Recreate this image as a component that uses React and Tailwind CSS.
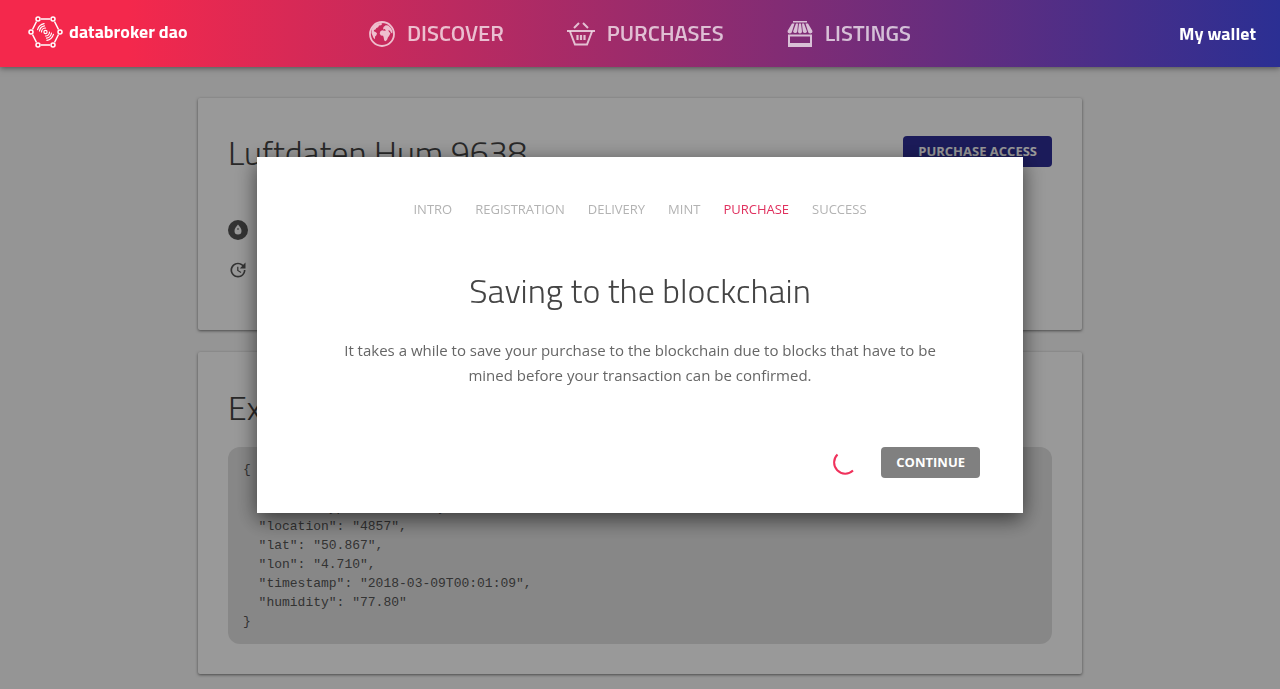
import React from "react";
import { MdUpdate } from "react-icons/md";

const steps = ["Intro", "Registration", "Delivery", "Mint", "Purchase", "Success"];

const example = `{
  "key": "9638",
  "sensor_type": "humidity",
  "location": "4857",
  "lat": "50.867",
  "lon": "4.710",
  "timestamp": "2018-03-09T00:01:09",
  "humidity": "77.80"
}`;

function Logo() {
  const nodes = [[10, 3], [25, 3], [32, 16], [25, 29], [10, 29], [3, 16]];
  return (
    <svg viewBox="0 0 35 32" className="h-8 w-[35px]" fill="none" stroke="currentColor" strokeWidth="1.5">
      <path d="M13 3h9M26.5 5.5l4 8M30.5 18.5l-4 8M22 29h-9M8.5 26.5l-4-8M4.5 13.5l4-8" />
      {nodes.map(([x, y]) => (
        <circle key={`${x}-${y}`} cx={x} cy={y} r="2" />
      ))}
      <circle cx="17.5" cy="16" r="1.6" strokeWidth="1.2" />
      <g strokeWidth="1.2" strokeLinecap="round">
        <path d="M13.5 16a4 4 0 0 1 4-4M11.5 15a6.200 6.200 0 0 1 5-5.200M9.600 13.700a8.400 8.400 0 0 1 6.500-6" />
        <path d="M21.5 16a4 4 0 0 1-4 4M23.5 17a6.200 6.200 0 0 1-5 5.200M25.400 18.300a8.400 8.400 0 0 1-6.500 6" />
      </g>
    </svg>
  );
}

function GlobeIcon() {
  return (
    <svg viewBox="0 0 26 26" className="size-[26px]" fill="currentColor">
      <circle cx="13" cy="13" r="12" fill="none" stroke="currentColor" strokeWidth="1.8" />
      <path d="M3 8C5 4 8.500 2 12 2l1.500.8-1.500 1.500-2 .3-.8 1.700-1.800.7-.9 1.500-1.500.4-.200 1.300 1.700.9 1.500 1.200-.6 2-1.300 1.300-.200 2.700-1.500-1.500-1-2.500L2.500 12z" />
      <path d="M14.5 6l2.200-1.800 2.500.3c2.500 1.800 4 4 4.300 6.500l-.3 1.500-1.400-1-.7-1.800-1.900-.5.9 1.700 1.300 1.300-1.200 2.500-1.300 1.700-.7 2.200-1.500 1.600-1.500-.6-.5-3.200-.6-1.600-2.200-.4-1.200-1.800.7-2.400 1.800-1 2 .6 1.800-.4-1.300-1.300-1.700.3z" />
    </svg>
  );
}

function BasketIcon() {
  return (
    <svg viewBox="0 0 28 24" className="h-6 w-7" fill="none" stroke="currentColor" strokeWidth="2">
      <path d="M0 9h28" />
      <path d="M3 9.5l5 13h12l5-13" />
      <path d="M7 6l5-5M21 6l-5-5" />
      <path d="M10.500 13v5M14 13v5M17.500 13v5" strokeWidth="2.200" />
    </svg>
  );
}

function StoreIcon() {
  return (
    <svg viewBox="0 0 26 26" className="size-[26px]" fill="currentColor">
      <path d="M6 0h14v1.500H6z" />
      <path d="M5 2.500h2.500L5 10.500a2.200 2.200 0 0 1-4.500-.5zM9 2.500h2l-.7 8a2.200 2.200 0 0 1-4.200 0zM12 2.500h2l1 8a2 2 0 0 1-4 0zM15 2.500h2l3 8a2.200 2.200 0 0 1-4.200 0zM18.500 2.500H21l4.500 7.500a2.200 2.200 0 0 1-4.500.5z" />
      <path fillRule="evenodd" d="M1 13.500h24V26H1zM3 15.500V22h20v-6.500z" />
    </svg>
  );
}

function NavItem({ icon, children }) {
  return (
    <a href="#" className="flex items-center gap-3 text-white/70">
      {icon}
      <span>{children}</span>
    </a>
  );
}

function Header() {
  return (
    <header className="relative z-20 grid h-[67px] grid-cols-[1fr_auto_1fr] items-center bg-linear-to-r/srgb from-[#f4284c] from-10% to-[#2b2f93] px-6 font-['Titillium_Web','Roboto',sans-serif] text-white shadow-[0_1px_6px_rgba(0,0,0,0.5)]">
      <a href="#" className="flex items-center gap-[6px] pl-1 pb-1 text-lg font-bold">
        <Logo />
        <span>databroker dao</span>
      </a>
      <nav className="flex gap-[63px] text-[22px] font-semibold">
        <NavItem icon={<GlobeIcon />}>DISCOVER</NavItem>
        <NavItem icon={<BasketIcon />}>PURCHASES</NavItem>
        <NavItem icon={<StoreIcon />}>LISTINGS</NavItem>
      </nav>
      <a href="#" className="justify-self-end text-lg font-bold">My wallet</a>
    </header>
  );
}

function Card({ children, className = "" }) {
  return (
    <section className={`rounded-xs bg-white px-[30px] shadow-[0_1px_3px_rgba(0,0,0,0.5)] ${className}`}>
      {children}
    </section>
  );
}

function Modal() {
  return (
    <div className="fixed inset-0 z-10 flex items-start justify-center bg-black/40 pt-[157px]">
      <div role="dialog" aria-labelledby="dialog-title" className="w-3/5 max-w-[766px] bg-white px-[43px] pt-[42px] pb-[35px] shadow-[0_6px_20px_rgba(0,0,0,0.6)]">
        {/* Steps */}
        <ol className="flex justify-center gap-[23px] text-[13px] leading-5 text-[#b3b3b3] uppercase">
          {steps.map((step) => (
            <li key={step} className={step === "Purchase" ? "text-[#e0305e]" : ""}>
              {step}
            </li>
          ))}
        </ol>

        <h1 id="dialog-title" className="mt-[47px] text-center font-['Titillium_Web','Roboto',sans-serif] text-[34px] leading-[48px] font-light text-[#444]">
          Saving to the blockchain
        </h1>
        <p className="mx-auto mt-6 max-w-[600px] text-center text-[15px] leading-[25px] text-[#666]">
          It takes a while to save your purchase to the blockchain due to blocks that have to be mined before your transaction can be confirmed.
        </p>

        {/* Actions */}
        <div className="mt-[59px] flex items-center justify-end gap-6">
          <svg viewBox="0 0 24 24" className="size-6" fill="none" stroke="#f0325c" strokeWidth="2">
            <path d="M4.500 3.500A10 10 0 0 0 20 19.500" />
          </svg>
          <button type="button" className="h-[31px] rounded bg-[#808080] px-[15px] text-[13px] font-bold text-white">CONTINUE</button>
        </div>
      </div>
    </div>
  );
}

export default function App() {
  return (
    <div className="min-h-screen bg-[#f8f8f8] font-['Open_Sans',sans-serif] text-[#444]">
      <Header />
      <main className="mx-auto mt-[31px] flex max-w-[884px] flex-col gap-[22px] pb-4">
        <Card className="pt-[30px] pb-[50px]">
          <div className="flex items-start justify-between">
            <h2 className="font-['Titillium_Web','Roboto',sans-serif] text-[34px] leading-[48px] font-light">Luftdaten Hum 9638</h2>
            <button type="button" className="mt-2 h-[31px] rounded bg-[#2e2e96] px-[15px] text-[13px] font-bold text-white">PURCHASE ACCESS</button>
          </div>
          <ul className="mt-11 flex flex-col gap-5 text-sm">
            <li className="flex items-center gap-3">
              <svg viewBox="0 0 20 20" className="size-5">
                <circle cx="10" cy="10" r="10" fill="#555" />
                <path d="M10 4.5c2 2.300 3.500 4 3.500 6.500a3.500 3.500 0 0 1-7 0c0-2.500 1.500-4.200 3.500-6.500z" fill="#fff" />
                <path d="M10 8v2" stroke="#555" />
              </svg>
              Humidity
            </li>
            <li className="flex items-center gap-3">
              <MdUpdate className="size-5 text-[#555]" />
              Every 5 minutes
            </li>
          </ul>
        </Card>
        <Card className="pt-[31px] pb-[30px]">
          <h2 className="font-['Titillium_Web','Roboto',sans-serif] text-[34px] leading-[48px] font-light">Example data</h2>
          <pre className="mt-4 rounded-xl bg-[#e2e2e2] px-[15px] py-[13px] font-['Consolas','Liberation_Mono',monospace] text-[13px] leading-[19px] text-[#555]">{example}</pre>
        </Card>
      </main>
      <Modal />
    </div>
  );
}
